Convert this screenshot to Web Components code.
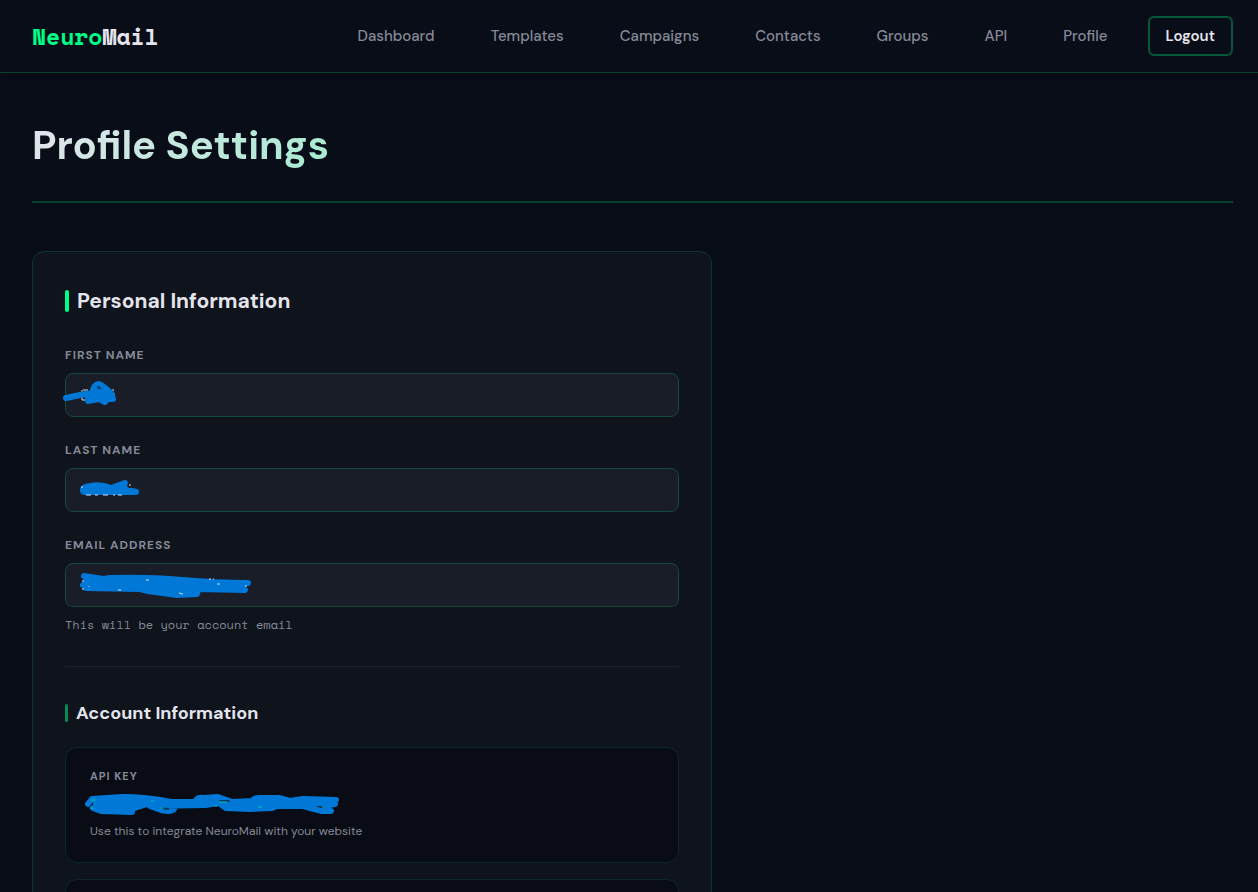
<!DOCTYPE html>
<html lang="en">
<head>
<meta charset="utf-8">
<meta name="viewport" content="width=device-width, initial-scale=1">
<title>NeuroMail</title>
<style>
  :root {
    --nm-bg: #090d18;
    --nm-green: #00ff88;
    --nm-text: #e4e4ec;
    --nm-muted: #858996;
    --nm-card: #0f131c;
    --nm-input: #191d27;
    --nm-tile: #090c14;
    --nm-mark: #0078d7;
    --nm-sans: 'DM Sans', Inter, 'Open Sans', sans-serif;
    --nm-mono: 'Space Mono', 'Liberation Mono', monospace;
  }

  body {
    margin: 0;
    background: var(--nm-bg);
    color: var(--nm-text);
    font-family: var(--nm-sans);
  }

  /* Marker strokes share one look wherever they are slotted */
  svg .line { fill: none; stroke: var(--nm-mark); stroke-width: 6; stroke-linecap: round; stroke-linejoin: round; }
  svg .blob { fill: var(--nm-mark); }
  svg .speck { fill: none; stroke: #cfe0f2; stroke-width: 1; }
  svg .teal { fill: none; stroke: #00c8a8; stroke-width: 1; }
  svg .gap { fill: none; stroke: #0c3a66; stroke-width: 2; stroke-linecap: round; }
</style>
</head>
<body>

<nm-shell>
  <nm-nav slot="header">
    <a href="#dashboard">Dashboard</a>
    <a href="#templates">Templates</a>
    <a href="#campaigns">Campaigns</a>
    <a href="#contacts">Contacts</a>
    <a href="#groups">Groups</a>
    <a href="#api">API</a>
    <a href="#profile">Profile</a>
  </nm-nav>

  <nm-title>Profile Settings</nm-title>

  <nm-card>
    <nm-section level="2">
      <span slot="title">Personal Information</span>
      <nm-field label="First Name" type="text">
        <svg slot="mark" viewBox="60 373 200 44" width="200" height="44" aria-hidden="true">
          <path class="speck" d="M83 390h5M82 390v10h5M113 389v2M114 393v4"/>
          <path class="blob" d="M88 394L92 391L95 388L102 389L106 387L113 394L114 399L105 403L99 399L88 402L86 400Z"/>
          <path class="line" d="M66 398L80 395L92 393Q94 384 99 384Q102 385 104 387L111 393L113 399L107 399L105 402L99 399L88 401L88 397"/>
          <path class="gap" d="M98 387h1"/>
        </svg>
      </nm-field>
      <nm-field label="Last Name" type="text">
        <svg slot="mark" viewBox="60 468 200 44" width="200" height="44" aria-hidden="true">
          <path class="blob" d="M82 487L98 484L111 487L125 482L129 489L137 492L128 494L83 494Z"/>
          <path class="line" d="M83 491Q82 487 90 486Q101 484 111 488L125 483L118 490L132 491L136 492L113 492L84 492"/>
          <path class="speck" d="M82 486v2M129 485h2M86 495h5M95 495h3M103 495h5M113 495h2M118 495h4"/>
        </svg>
      </nm-field>
      <nm-field label="Email Address" type="email" help="This will be your account email">
        <svg slot="mark" viewBox="60 563 200 44" width="200" height="44" aria-hidden="true">
          <path class="blob" d="M84 577L106 579L110 576L150 576L195 580L236 582L248 583L244 591L198 591L195 596L177 595L150 592L140 590L86 590L82 585Z"/>
          <path class="line" d="M84 576L103 579L110 578Q150 577 182 580Q218 583 248 583L233 584L245 590L198 589L197 594L177 595L148 591L140 589L86 588L83 585L88 581"/>
          <path class="speck" d="M83 580v2M83 588v2M118 590h3M209 579h2M213 579h1M246 585v2M146 580h3M217 584h3M179 593l4 1M89 586v1"/>
        </svg>
      </nm-field>
    </nm-section>

    <nm-section level="3">
      <span slot="title">Account Information</span>
      <nm-tile>
        <span slot="label">API Key</span>
        <svg slot="value" viewBox="80 790 270 28" width="270" height="28" aria-hidden="true">
          <path class="blob" d="M92 799L123 796L146 799L178 801L195 801L199 798L216 797L232 801L250 801L255 798L278 798L292 800L334 801L330 806L300 806L276 807L250 810L225 807L215 804L205 806L150 806L132 812L94 810Z"/>
          <path class="line" d="M88 804L92 799L123 797Q146 797 171 802L196 802Q196 797 204 798L218 797L232 802L253 801Q253 798 260 798L279 798L290 801L303 799L336 800L328 802L335 804L323 806L331 811L322 811L303 806L277 806L272 808L250 809L226 808L219 803L205 805L150 806L161 810Q176 813 174 806M93 808L101 811L132 812"/>
          <path class="gap" d="M162 808l6 1M220 801h9M320 807h4"/>
          <path class="teal" d="M91 800h5M90 808h3M151 801h3M160 808h4M219 802h8M215 806h2M258 807h4M322 807h3"/>
        </svg>
        <span slot="note">Use this to integrate NeuroMail with your website</span>
      </nm-tile>
      <nm-tile></nm-tile>
    </nm-section>
  </nm-card>
</nm-shell>

<script>
  // Attach an open shadow root and fill it once
  function render(host, html) {
    if (host.shadowRoot) return;
    host.attachShadow({ mode: 'open' }).innerHTML = html;
  }

  // Page frame: bar on top, scrolling content below
  customElements.define('nm-shell', class extends HTMLElement {
    connectedCallback() {
      render(this, `
        <style>
          :host {
            display: flex;
            flex-direction: column;
            height: 100vh;
          }
          header {
            position: relative;
            z-index: 1;
            flex: none;
          }
          main {
            flex: 1;
            min-height: 0;
            padding: 48px 25px 48px 32px;
            overflow-y: auto;
            scrollbar-width: none;
          }
        </style>
        <header><slot name="header"></slot></header>
        <main><slot></slot></main>
      `);
    }
  });

  customElements.define('nm-nav', class extends HTMLElement {
    connectedCallback() {
      render(this, `
        <style>
          :host {
            display: flex;
            align-items: center;
            justify-content: space-between;
            padding: 16px 25px 16px 32px;
            background: var(--nm-bg);
            border-bottom: 1px solid #07402e;
            box-shadow: 0 4px 20px rgba(0, 0, 0, 0.2);
          }
          .logo {
            font: 700 23px/32px var(--nm-mono);
            color: var(--nm-text);
            text-decoration: none;
          }
          .logo span { color: var(--nm-green); }
          nav {
            display: flex;
            align-items: center;
            gap: 24px;
          }
          ::slotted(a) {
            padding: 8px 16px;
            color: var(--nm-muted);
            font-size: 15px;
            font-weight: 500;
            line-height: 24px;
            text-decoration: none;
          }
          ::slotted(a:hover) { color: var(--nm-green); }
          button {
            height: 40px;
            padding: 0 16px;
            background: none;
            border: 2px solid #05593a;
            border-radius: 6px;
            color: var(--nm-text);
            font: 600 15px/24px var(--nm-sans);
            cursor: pointer;
          }
          button:hover { border-color: var(--nm-green); }
        </style>
        <a class="logo" href="#home"><span>Neuro</span>Mail</a>
        <nav>
          <slot></slot>
          <button type="button">Logout</button>
        </nav>
      `);
    }
  });

  customElements.define('nm-title', class extends HTMLElement {
    connectedCallback() {
      render(this, `
        <style>
          :host {
            display: block;
            padding-bottom: 32px;
            margin-bottom: 48px;
            border-bottom: 2px solid #07402e;
          }
          h1 {
            margin: 0;
            font-size: 40px;
            font-weight: 700;
            line-height: 48px;
            background: linear-gradient(135deg, var(--nm-text) 0%, var(--nm-green) 100%);
            -webkit-background-clip: text;
            background-clip: text;
            color: transparent;
          }
        </style>
        <h1><slot></slot></h1>
      `);
    }
  });

  customElements.define('nm-card', class extends HTMLElement {
    connectedCallback() {
      render(this, `
        <style>
          :host {
            display: block;
            box-sizing: border-box;
            max-width: 680px;
            padding: 32px;
            background: var(--nm-card);
            border: 1px solid #0f3430;
            border-radius: 12px;
            box-shadow: 0 4px 20px rgba(0, 0, 0, 0.1);
          }
        </style>
        <slot></slot>
      `);
    }
  });

  // Titled group of rows; level 3 is the smaller one with a rule above
  customElements.define('nm-section', class extends HTMLElement {
    connectedCallback() {
      const tag = this.getAttribute('level') === '3' ? 'h3' : 'h2';
      render(this, `
        <style>
          :host { display: block; }
          :host([level="3"]) {
            margin-top: 32px;
            padding-top: 32px;
            border-top: 1px solid #1c2029;
          }
          h2, h3 {
            display: flex;
            align-items: center;
            gap: 8px;
            margin: 0;
            font-weight: 700;
          }
          h2 { font-size: 21px; line-height: 34px; }
          h3 { font-size: 18px; line-height: 28px; }
          h2::before, h3::before {
            content: '';
            border-radius: 2px;
          }
          h2::before { width: 4px; height: 22px; background: var(--nm-green); }
          h3::before { width: 3px; height: 18px; background: #078a53; }
          .rows {
            display: flex;
            flex-direction: column;
            gap: 24px;
            margin-top: 28px;
          }
          :host([level="3"]) .rows { gap: 16px; margin-top: 20px; }
        </style>
        <${tag}><slot name="title"></slot></${tag}>
        <div class="rows"><slot></slot></div>
      `);
    }
  });

  customElements.define('nm-field', class extends HTMLElement {
    connectedCallback() {
      const help = this.getAttribute('help');
      render(this, `
        <style>
          :host { display: block; }
          label {
            display: block;
            margin-bottom: 8px;
            color: var(--nm-muted);
            font-size: 12px;
            font-weight: 700;
            line-height: 19px;
            letter-spacing: 1px;
            text-transform: uppercase;
          }
          .control { position: relative; }
          input {
            display: block;
            box-sizing: border-box;
            width: 100%;
            height: 44px;
            padding: 0 16px;
            background: var(--nm-input);
            border: 1px solid #15493c;
            border-radius: 8px;
            color: var(--nm-text);
            font: 400 14px/20px var(--nm-mono);
          }
          input:focus { outline: none; border-color: var(--nm-green); }
          ::slotted(svg) {
            position: absolute;
            top: 0;
            left: -5px;
            pointer-events: none;
          }
          p {
            margin: 8px 0 0;
            color: var(--nm-muted);
            font: 400 12px/19px var(--nm-mono);
          }
        </style>
        <label for="input">${this.getAttribute('label')}</label>
        <div class="control">
          <input id="input" type="${this.getAttribute('type')}">
          <slot name="mark"></slot>
        </div>
        ${help ? `<p>${help}</p>` : ''}
      `);
    }
  });

  customElements.define('nm-tile', class extends HTMLElement {
    connectedCallback() {
      render(this, `
        <style>
          :host {
            display: flex;
            flex-direction: column;
            box-sizing: border-box;
            min-height: 116px;
            padding: 18px 24px;
            background: var(--nm-tile);
            border: 1px solid #0b2826;
            border-radius: 12px;
          }
          .label {
            color: var(--nm-muted);
            font-size: 11px;
            font-weight: 700;
            line-height: 20px;
            letter-spacing: 1px;
            text-transform: uppercase;
          }
          .value {
            position: relative;
            height: 35px;
          }
          ::slotted(svg) {
            position: absolute;
            top: 4px;
            left: -10px;
          }
          .note {
            color: var(--nm-muted);
            font-size: 12px;
            line-height: 20px;
          }
        </style>
        <div class="label"><slot name="label"></slot></div>
        <div class="value"><slot name="value"></slot></div>
        <div class="note"><slot name="note"></slot></div>
      `);
    }
  });
</script>
</body>
</html>
